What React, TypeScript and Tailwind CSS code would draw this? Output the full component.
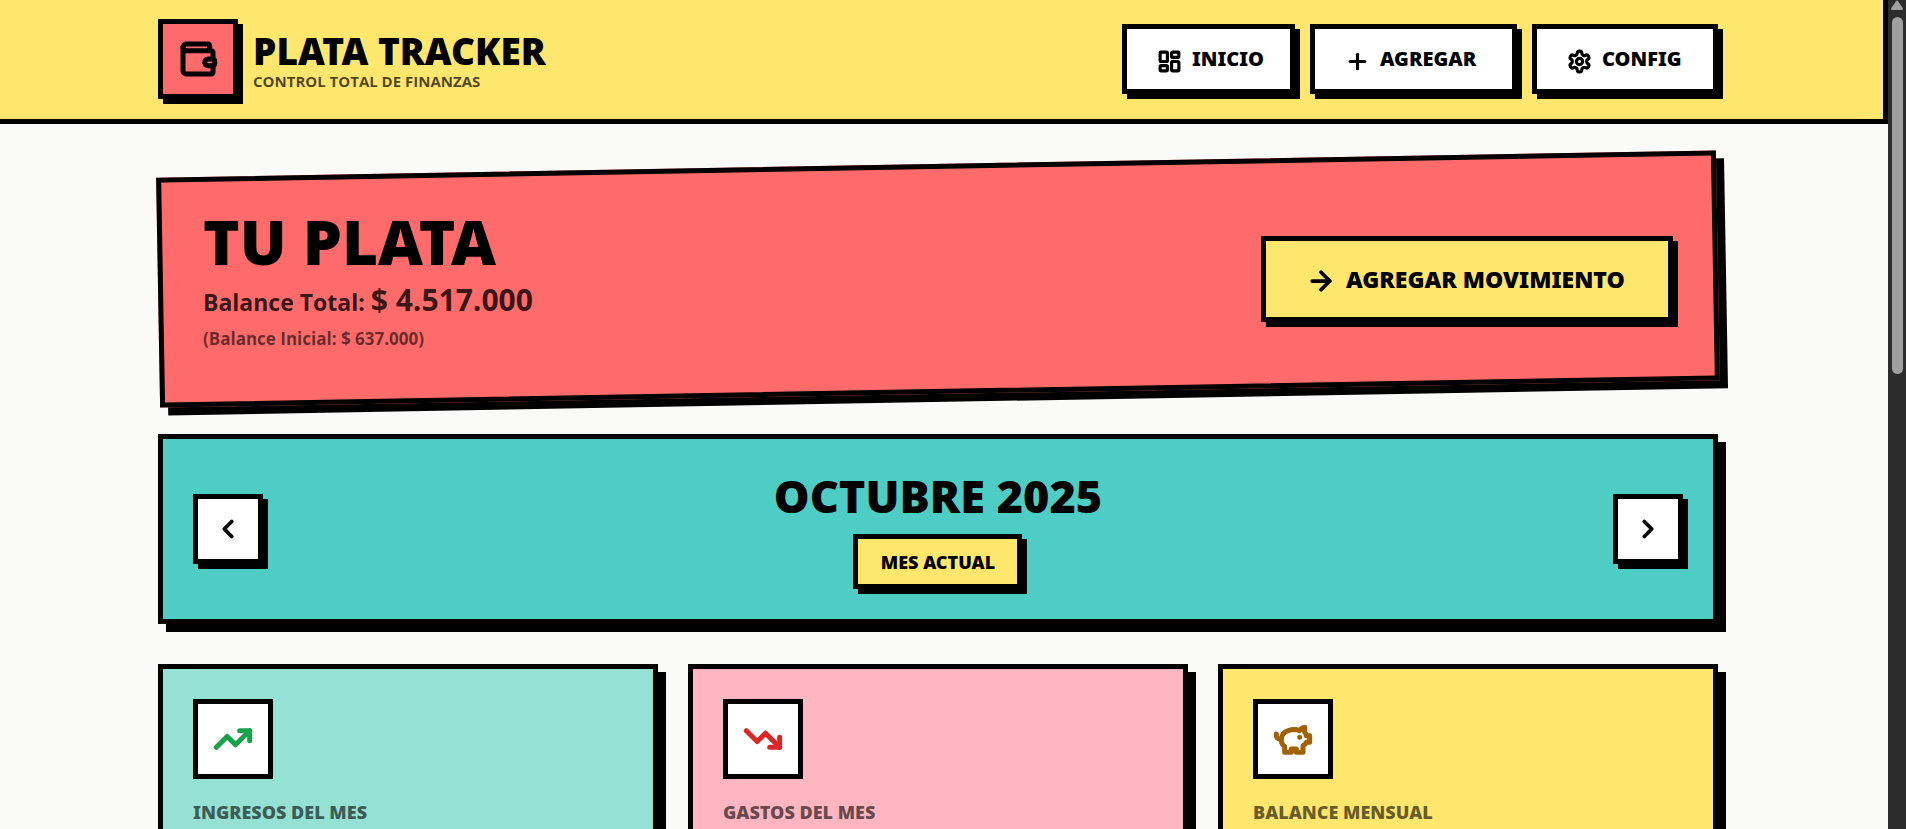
import type { ComponentType, ReactNode } from "react";
import {
  ArrowRight,
  ChevronLeft,
  ChevronRight,
  LayoutDashboard,
  Plus,
  TrendingDown,
  TrendingUp,
  Wallet,
} from "lucide-react";
import type { LucideProps } from "lucide-react";

type Icon = ComponentType<LucideProps>;

function StrokeIcon({
  size = 24,
  strokeWidth = 2,
  className,
  children,
}: LucideProps & { children?: ReactNode }) {
  return (
    <svg
      width={size}
      height={size}
      viewBox="0 0 24 24"
      fill="none"
      stroke="currentColor"
      strokeWidth={strokeWidth}
      strokeLinecap="round"
      strokeLinejoin="round"
      className={className}
      aria-hidden="true"
    >
      {children}
    </svg>
  );
}

function PiggyBank(props: LucideProps) {
  return (
    <StrokeIcon size={props.size} strokeWidth={props.strokeWidth} className={props.className}>
      <path d="M19 5c-1.5 0-2.8 1.4-3 2-3.5-1.5-11-.3-11 5 0 1.8 0 3 2 4.5V20h4v-2h3v2h4v-4c1-.5 1.7-1 2-2h2v-4h-2c0-1-.5-1.5-1-2V5z" />
      <path d="M2 9v1c0 1.1.9 2 2 2h1" />
      <path d="M16 11h.01" />
    </StrokeIcon>
  );
}

function Gear(props: LucideProps) {
  return (
    <StrokeIcon size={props.size} strokeWidth={props.strokeWidth} className={props.className}>
      <path d="M12.22 2h-.44a2 2 0 0 0-2 2v.18a2 2 0 0 1-1 1.73l-.43.25a2 2 0 0 1-2 0l-.15-.08a2 2 0 0 0-2.73.73l-.22.38a2 2 0 0 0 .73 2.73l.15.1a2 2 0 0 1 1 1.72v.51a2 2 0 0 1-1 1.74l-.15.09a2 2 0 0 0-.73 2.73l.22.38a2 2 0 0 0 2.73.73l.15-.08a2 2 0 0 1 2 0l.43.25a2 2 0 0 1 1 1.73V20a2 2 0 0 0 2 2h.44a2 2 0 0 0 2-2v-.18a2 2 0 0 1 1-1.73l.43-.25a2 2 0 0 1 2 0l.15.08a2 2 0 0 0 2.73-.73l.22-.39a2 2 0 0 0-.73-2.73l-.15-.08a2 2 0 0 1-1-1.74v-.5a2 2 0 0 1 1-1.74l.15-.09a2 2 0 0 0 .73-2.73l-.22-.38a2 2 0 0 0-2.73-.73l-.15.08a2 2 0 0 1-2 0l-.43-.25a2 2 0 0 1-1-1.73V4a2 2 0 0 0-2-2z" />
      <circle cx="12" cy="12" r="3" />
    </StrokeIcon>
  );
}

const navItems: { label: string; icon: Icon; width: string }[] = [
  { label: "INICIO", icon: LayoutDashboard, width: "w-[173px]" },
  { label: "AGREGAR", icon: Plus, width: "w-[207px]" },
  { label: "CONFIG", icon: Gear, width: "w-[186px]" },
];

const stats: { label: string; icon: Icon; card: string; tint: string }[] = [
  { label: "INGRESOS DEL MES", icon: TrendingUp, card: "bg-[#95e1d3]", tint: "text-[#16a34a]" },
  { label: "GASTOS DEL MES", icon: TrendingDown, card: "bg-[#ffb6c1]", tint: "text-[#dc2626]" },
  { label: "BALANCE MENSUAL", icon: PiggyBank, card: "bg-[#ffe66d]", tint: "text-[#a16207]" },
];

function Container({ children, className = "" }: { children: ReactNode; className?: string }) {
  return <div className={`mx-auto w-full max-w-[1560px] ${className}`}>{children}</div>;
}

function Header() {
  return (
    <header className="border-r-5 border-b-5 border-black bg-[#ffe66d] pt-[19px] pr-[7px] pb-5">
      <Container className="flex items-center justify-between">
        <div className="flex items-center gap-[15px]">
          <div className="flex size-20 items-center justify-center border-5 border-black bg-[#ff6b6b] shadow-[5px_5px_0_#000]">
            <Wallet size={40} strokeWidth={3} />
          </div>
          <div className="pt-1">
            <h1 className="text-[37px] leading-10 font-black">PLATA TRACKER</h1>
            <p className="font-['Open_Sans',sans-serif] text-[15px] leading-5 font-bold text-black/70">
              CONTROL TOTAL DE FINANZAS
            </p>
          </div>
        </div>
        <nav className="flex gap-[15px]">
          {navItems.map(({ label, icon: NavIcon, width }) => (
            <a
              key={label}
              href="#"
              className={`flex h-[70px] items-center gap-[10px] border-5 border-black bg-white pl-[30px] text-[20px] leading-6 font-black shadow-[5px_5px_0_#000] ${width}`}
            >
              <NavIcon size={25} strokeWidth={3} className="mt-1 shrink-0" />
              {label}
            </a>
          ))}
        </nav>
      </Container>
    </header>
  );
}

function Hero() {
  return (
    <section className="-rotate-1 border-5 border-black bg-[#ff6b6b] p-10 shadow-[8px_8px_0_#000]">
      <div className="flex h-[140px] rotate-1 items-center justify-between">
        <div className="h-full">
          <h2 className="text-[62px] leading-[64px] font-black">TU PLATA</h2>
          <p className="font-['Open_Sans',sans-serif] text-[23px] leading-[54px] font-bold text-black/80">
            Balance Total: <span className="text-[30px]">$ 4.517.000</span>
          </p>
          <p className="font-['Open_Sans',sans-serif] text-[17px] leading-5 font-bold text-black/60">
            (Balance Inicial: $ 637.000)
          </p>
        </div>
        <button
          type="button"
          className="flex h-[86px] w-[412px] items-center gap-[10px] border-5 border-black bg-[#ffe66d] pl-10 text-[23px] leading-7 font-black shadow-[5px_5px_0_#000]"
        >
          <ArrowRight size={30} strokeWidth={3} className="mt-1 shrink-0" />
          AGREGAR MOVIMIENTO
        </button>
      </div>
    </section>
  );
}

function MonthButton({ label, icon: ArrowIcon }: { label: string; icon: Icon }) {
  return (
    <button
      type="button"
      aria-label={label}
      className="flex size-[70px] items-center justify-center border-5 border-black bg-white shadow-[5px_5px_0_#000]"
    >
      <ArrowIcon size={30} strokeWidth={3} />
    </button>
  );
}

function MonthPicker() {
  return (
    <section className="flex items-center justify-between border-5 border-black bg-[#4ecdc4] p-[30px] shadow-[8px_8px_0_#000]">
      <MonthButton label="Mes anterior" icon={ChevronLeft} />
      <div className="flex h-[120px] flex-col items-center justify-between">
        <h2 className="text-[45px] leading-[54px] font-black">OCTUBRE 2025</h2>
        <span className="flex h-[55px] w-[169px] items-center justify-center border-5 border-black bg-[#ffe66d] text-[18px] leading-6 font-black shadow-[5px_5px_0_#000]">
          MES ACTUAL
        </span>
      </div>
      <MonthButton label="Mes siguiente" icon={ChevronRight} />
    </section>
  );
}

export default function App() {
  return (
    <div className="flex h-screen overflow-hidden bg-[#fafaf9] font-['Noto_Sans',sans-serif] text-black">
      <div className="min-w-0 flex-1">
        <Header />
        <main className="pt-10 pr-3">
          <Container className="flex flex-col gap-10">
            <Hero />
            <MonthPicker />
            <div className="grid grid-cols-3 gap-[30px]">
              {stats.map(({ label, icon: StatIcon, card, tint }) => (
                <article key={label} className={`min-h-[240px] border-5 border-black p-[30px] shadow-[8px_8px_0_#000] ${card}`}>
                  <div className="flex size-20 items-center justify-center border-5 border-black bg-white">
                    <StatIcon size={40} strokeWidth={3} className={tint} />
                  </div>
                  <h3 className="mt-5 text-[18px] leading-[26px] font-black text-black/60">{label}</h3>
                </article>
              ))}
            </div>
          </Container>
        </main>
      </div>
      <div aria-hidden="true" className="flex w-[18px] flex-col items-center gap-[7px] bg-[#2c2c2c]">
        <svg width="12" height="10" viewBox="0 0 12 10" className="shrink-0 fill-[#9f9f9f]">
          <path d="M5 1.2Q6 0 7 1.2L11.7 8Q12.4 10 11 10H1Q-.4 10 .3 8Z" />
        </svg>
        <div className="h-[357px] w-[11px] rounded-full bg-[#9f9f9f]" />
      </div>
    </div>
  );
}
